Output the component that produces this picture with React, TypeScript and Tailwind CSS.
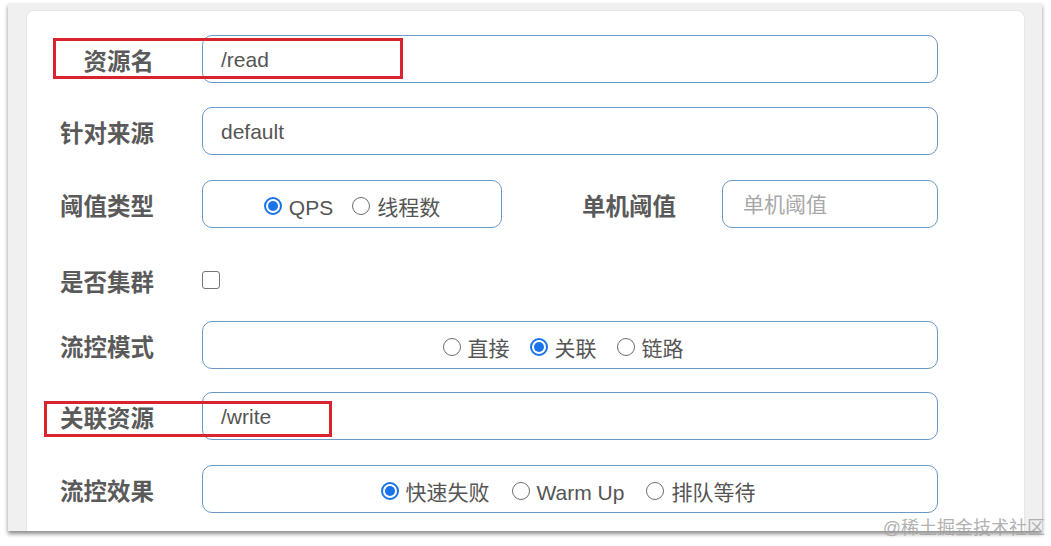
import React from "react";

const FONT = { fontFamily: '"Liberation Sans", "Noto Sans CJK SC", sans-serif' };

function Radio({ checked, label }: { checked?: boolean; label: string }) {
  return (
    <span className="flex items-center">
      {checked ? (
        <span className="w-[18px] h-[18px] mt-[3px] rounded-full border-[2px] border-[#1a73e8] flex items-center justify-center bg-white shrink-0">
          <span className="w-[10px] h-[10px] rounded-full bg-[#1a73e8]" />
        </span>
      ) : (
        <span className="w-[18px] h-[18px] mt-[3px] rounded-full border-[1.5px] border-[#6e6e6e] bg-white shrink-0" />
      )}
      <span className="ml-[7px] pt-[7px] text-[21px] leading-none text-[#555]">{label}</span>
    </span>
  );
}

function Label({ children }: { children: React.ReactNode }) {
  return (
    <div className="w-[127px] shrink-0 text-right pt-[8px] text-[23.5px] font-bold leading-none text-[#5a5a5a]">
      {children}
    </div>
  );
}

function Box({ children, className = "" }: { children?: React.ReactNode; className?: string }) {
  return (
    <div
      className={
        "h-[48px] rounded-[10px] border-[1.5px] border-[#6a99c8] bg-white flex items-center " + className
      }
    >
      {children}
    </div>
  );
}

export default function App() {
  return (
    <div className="w-[1051px] h-[546px] bg-white overflow-hidden relative" style={FONT}>
      <div className="ml-[8px] mt-[3px] w-[1034px] h-[528px] bg-[#f0f0f0] shadow-[0_3px_4px_rgba(0,0,0,0.45)] pl-[18px] pt-[7px] pr-[17px] flex">
        <div className="flex-1 bg-white rounded-t-[8px] border border-[#e6e6e6] border-b-0 flex flex-col pt-[24px]">
          {/* 资源名 */}
          <div className="flex items-center h-[48px]">
            <Label>资源名</Label>
            <Box className="ml-[48px] w-[736px] pl-[18px]">
              <span className="text-[21px] text-[#555] leading-none">/read</span>
            </Box>
          </div>
          {/* 针对来源 */}
          <div className="flex items-center h-[48px] mt-[24px]">
            <Label>针对来源</Label>
            <Box className="ml-[48px] w-[736px] pl-[18px]">
              <span className="text-[21px] text-[#555] leading-none">default</span>
            </Box>
          </div>
          {/* 阈值类型 */}
          <div className="flex items-center h-[48px] mt-[25px]">
            <Label>阈值类型</Label>
            <Box className="ml-[48px] w-[300px] justify-center gap-[19px]">
              <Radio checked label="QPS" />
              <Radio label="线程数" />
            </Box>
            <div className="ml-[80px] pt-[8px] text-[23.5px] font-bold leading-none text-[#5a5a5a]">单机阈值</div>
            <Box className="ml-[46px] w-[216px] pl-[20px]">
              <span className="text-[21px] text-[#a8a8a8] leading-none">单机阈值</span>
            </Box>
          </div>
          {/* 是否集群 */}
          <div className="flex items-center h-[48px] mt-[28px]">
            <Label>是否集群</Label>
            <span className="ml-[48px] w-[18px] h-[18px] rounded-[3px] border-[1.5px] border-[#767676] bg-white" />
          </div>
          {/* 流控模式 */}
          <div className="flex items-center h-[48px] mt-[17px]">
            <Label>流控模式</Label>
            <Box className="ml-[48px] w-[736px] justify-center gap-[20px] pr-[14px]">
              <Radio label="直接" />
              <Radio checked label="关联" />
              <Radio label="链路" />
            </Box>
          </div>
          {/* 关联资源 */}
          <div className="flex items-center h-[48px] mt-[23px]">
            <Label>关联资源</Label>
            <Box className="ml-[48px] w-[736px] pl-[18px]">
              <span className="text-[21px] text-[#555] leading-none">/write</span>
            </Box>
          </div>
          {/* 流控效果 */}
          <div className="flex items-center h-[48px] mt-[25px]">
            <Label>流控效果</Label>
            <Box className="ml-[48px] w-[736px] justify-center gap-[22px] pr-[4px]">
              <Radio checked label="快速失败" />
              <Radio label="Warm Up" />
              <Radio label="排队等待" />
            </Box>
          </div>
        </div>
      </div>

      {/* annotation boxes */}
      <div className="absolute left-[53px] top-[38px] w-[350px] h-[41px] border-[3px] border-[#d9232e]" />
      <div className="absolute left-[44px] top-[401px] w-[288px] h-[36px] border-[3px] border-[#d9232e]" />

      {/* watermark */}
      <div className="absolute right-[6px] top-[519px] text-[18px] leading-none text-[#a0a0a0] opacity-80">
        @稀土掘金技术社区
      </div>
    </div>
  );
}
